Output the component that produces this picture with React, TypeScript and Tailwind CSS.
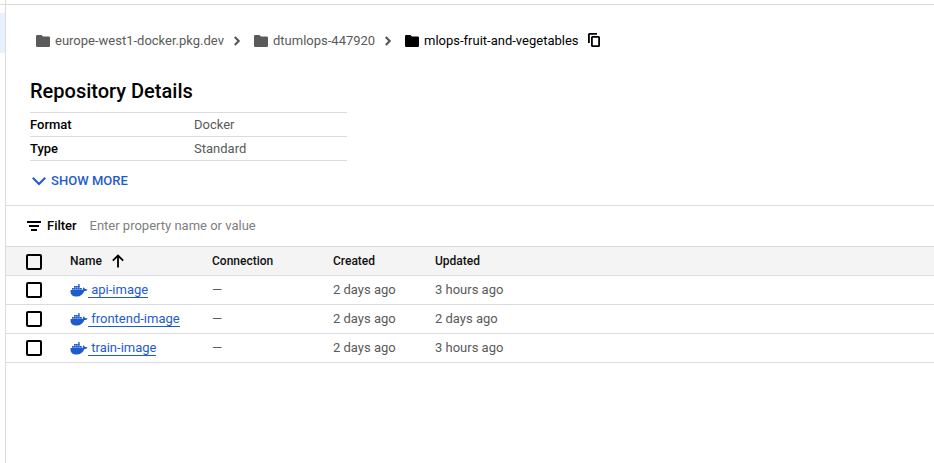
import React from "react";

const Folder = () => (
  <svg width="14" height="12" viewBox="0 0 14 12" fill="currentColor" className="shrink-0">
    <path d="M1.2 0H5.4L7 1.6H12.8A1.2 1.2 0 0 1 14 2.8V10.8A1.2 1.2 0 0 1 12.8 12H1.2A1.2 1.2 0 0 1 0 10.8V1.2A1.2 1.2 0 0 1 1.2 0Z" />
  </svg>
);

const Chevron = () => (
  <svg width="7" height="10" viewBox="0 0 7 10" fill="none" stroke="#555" strokeWidth="2.1" className="shrink-0">
    <path d="M0.8 1L4.7 5L0.8 9" />
  </svg>
);

const Copy = () => (
  <svg width="13" height="14" viewBox="0 0 13 14" fill="none" stroke="#000" className="shrink-0">
    <path d="M0.9 10V1.5A0.6 0.6 0 0 1 1.5 0.9H9" strokeWidth="1.8" />
    <rect x="3.9" y="3.9" width="7.2" height="9.2" rx="0.6" strokeWidth="1.8" />
  </svg>
);

const Whale = () => (
  <svg width="18" height="13" viewBox="0 0 18 13" fill="#1f5ccb" className="shrink-0">
    <path d="M0.6 5.9H12.5C13.1 5.4 12.7 4.2 13.5 3.2C14.3 3.7 14.8 4.4 14.8 5.1C15.8 4.9 16.8 5.1 17.5 5.5C17 6.6 16 7.1 14.4 7.1C13.2 10.6 10.3 12.6 6.8 12.6C2.9 12.6 0.5 10.6 0.5 7.4Z" />
    <path d="M2 3.9h1.8v1.8H2zM4 3.9h1.8v1.8H4zM6 3.9h1.8v1.8H6zM8 3.9h1.8v1.8H8zM10 3.9h1.8v1.8H10zM4 2h1.8v1.7H4zM6 2h1.8v1.7H6zM8 2h1.8v1.7H8zM8 0.2h1.8v1.6H8z" />
  </svg>
);

const Box = () => <span className="block h-4 w-4 shrink-0 rounded-[2px] border-2 border-black" />;

const cols = "grid grid-cols-[44px_142px_121px_102px_1fr] items-center pl-5 border-b border-[#dadce0]";

const rows = [
  { name: "api-image", updated: "3 hours ago" },
  { name: "frontend-image", updated: "2 days ago" },
  { name: "train-image", updated: "3 hours ago" },
];

export default function App() {
  return (
    <div className="flex h-[463px] w-[934px] flex-col overflow-hidden bg-white font-['Roboto',sans-serif] text-[13px] leading-4 text-[#5a5a5a]">
      <div className="h-[5px] shrink-0 border-b border-[#dcdcdc]">
        <div className="h-1 w-1.5 border-r border-[#dcdcdc]" />
      </div>
      <div className="flex flex-1">
        <aside className="w-1.5 shrink-0 border-r border-[#dcdcdc] pt-2">
          <div className="h-10 bg-[#e8f0fe]" />
        </aside>
        <main className="min-w-0 flex-1">
          <nav className="flex h-[71px] items-center pl-[30px]">
            <Folder />
            <span className="ml-[5px] w-[179px] whitespace-nowrap">europe-west1-docker.pkg.dev</span>
            <Chevron />
            <span className="ml-[13px] flex"><Folder /></span>
            <span className="ml-[5px] w-[112px] whitespace-nowrap">dtumlops-447920</span>
            <Chevron />
            <span className="ml-[13px] flex text-black"><Folder /></span>
            <span className="ml-[5px] w-[164px] whitespace-nowrap text-black">mlops-fruit-and-vegetables</span>
            <span className="-mt-px flex"><Copy /></span>
          </nav>
          <h1 className="ml-6 h-9 pt-[3px] text-[20px] font-medium leading-6 text-black">Repository Details</h1>
          <dl className="ml-6 w-[317px] border-t border-[#dcdcdc]">
            <div className="flex h-6 items-center border-b border-[#dcdcdc]">
              <dt className="w-[164px] font-medium text-black">Format</dt>
              <dd>Docker</dd>
            </div>
            <div className="flex h-6 items-center border-b border-[#dcdcdc]">
              <dt className="w-[164px] font-medium text-black">Type</dt>
              <dd>Standard</dd>
            </div>
          </dl>
          <button className="ml-[26px] flex h-10 items-center gap-[5px] font-medium text-[#1f5ccb]">
            <svg width="14" height="9" viewBox="0 0 14 9" fill="none" stroke="currentColor" strokeWidth="2">
              <path d="M0.8 0.8L7 7L13.2 0.8" />
            </svg>
            <span className="tracking-[0.03px]">SHOW MORE</span>
          </button>
          <div className="mt-1 flex h-[42px] items-center border-y border-[#dcdcdc] pl-[21px]">
            <svg width="14" height="10" viewBox="0 0 14 10" fill="#000">
              <path d="M0 0h14v2H0zM2 4h10v2H2zM4 8h6v2H4z" />
            </svg>
            <span className="ml-1.5 w-[43px] font-medium text-black">Filter</span>
            <span className="-ml-[0.5px] text-[#808080]">Enter property name or value</span>
          </div>
          <div className={cols + " h-[29px] bg-[#f4f4f4] text-[12px] font-medium text-[#111]"}>
            <span className="pt-0.5"><Box /></span>
            <span className="flex items-center gap-2.5">
              Name
              <svg width="12" height="14" viewBox="0 0 12 14" fill="none" stroke="#000" strokeWidth="1.8">
                <path d="M6 13.5V1.5M0.8 6.7L6 1.5L11.2 6.7" />
              </svg>
            </span>
            <span>Connection</span>
            <span>Created</span>
            <span>Updated</span>
          </div>
          {rows.map((r) => (
            <div key={r.name} className={cols + " h-[29px]"}>
              <Box />
              <span className="flex items-center">
                <Whale />
                <a className="whitespace-pre border-b border-[#1f5ccb] leading-[15px] text-[#1f5ccb]">{" " + r.name}</a>
              </span>
              <span>—</span>
              <span>2 days ago</span>
              <span>{r.updated}</span>
            </div>
          ))}
        </main>
      </div>
    </div>
  );
}
